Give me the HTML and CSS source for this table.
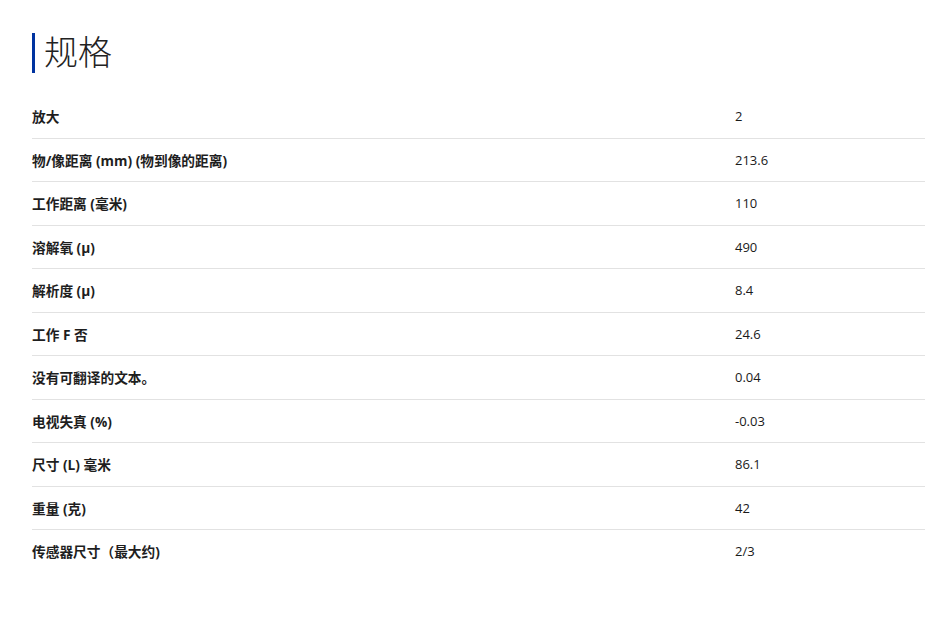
FILE: index.html
```html
<!DOCTYPE html>
<html lang="zh">
<head>
    <meta charset="UTF-8">
    <meta name="viewport" content="width=device-width, initial-scale=1.0">
    <title>规格</title>
    <link rel="stylesheet" href="styles.css">
</head>
<body>

    <div class="specs">
        <h2 class="specs-title">规格</h2>

        <!-- Tableau des specifications -->
        <div class="spec-list">
            <div class="spec-row"><div class="spec-name">放大</div><div class="spec-value">2</div></div>
            <div class="spec-row"><div class="spec-name">物/像距离 (mm) (物到像的距离)</div><div class="spec-value">213.6</div></div>
            <div class="spec-row"><div class="spec-name">工作距离 (毫米)</div><div class="spec-value">110</div></div>
            <div class="spec-row"><div class="spec-name">溶解氧 (μ)</div><div class="spec-value">490</div></div>
            <div class="spec-row"><div class="spec-name">解析度 (μ)</div><div class="spec-value">8.4</div></div>
            <div class="spec-row"><div class="spec-name">工作 F 否</div><div class="spec-value">24.6</div></div>
            <div class="spec-row"><div class="spec-name">没有可翻译的文本。</div><div class="spec-value">0.04</div></div>
            <div class="spec-row"><div class="spec-name">电视失真 (%)</div><div class="spec-value">-0.03</div></div>
            <div class="spec-row"><div class="spec-name">尺寸 (L) 毫米</div><div class="spec-value">86.1</div></div>
            <div class="spec-row"><div class="spec-name">重量 (克)</div><div class="spec-value">42</div></div>
            <div class="spec-row"><div class="spec-name">传感器尺寸（最大约)</div><div class="spec-value">2/3</div></div>
        </div>
    </div>

</body>
</html>
```

FILE: styles.css
```css
/* Style de base */
body {
    margin: 0;
    padding: 0;
    background-color: #ffffff;
    color: #222222;
    font-family: "Open Sans", "Noto Sans CJK SC", sans-serif;
}

.specs {
    padding: 33px 10px 40px 32px;
}

/* Titre avec barre bleue */
.specs-title {
    margin: 0 0 22px 0;
    padding-left: 9px;
    border-left: 3px solid #0033a0;
    height: 40px;
    line-height: 38px;
    font-size: 34px;
    font-weight: 300;
    color: #222222;
}

/* Lignes */
.spec-row {
    display: grid;
    grid-template-columns: 703px 1fr;
    align-items: center;
    padding: 13px 0 12px 0;
    min-height: 17.5px;
    line-height: 17px;
    border-bottom: 1px solid #e2e2e2;
}

.spec-row:last-child {
    border-bottom: none;
}

.spec-name {
    font-size: 13.7px;
    font-weight: bold;
    color: #1e1e1e;
}

.spec-value {
    font-size: 13px;
    color: #1a1a1a;
}
```
